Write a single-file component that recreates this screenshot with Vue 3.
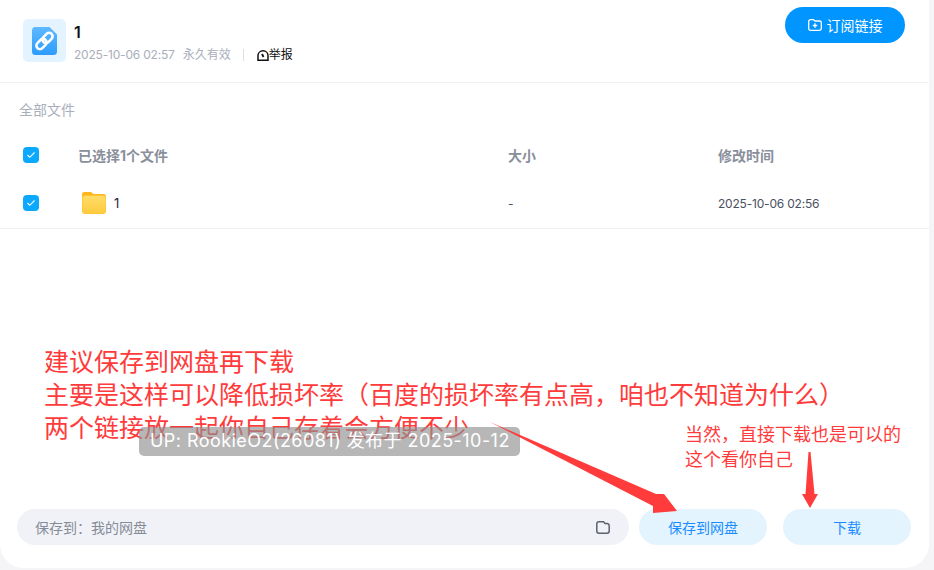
<template>
  <div class="page">
    <div class="card">
      <header class="share-head">
        <div class="file-badge">
          <svg width="25" height="28" viewBox="0 0 25 28">
            <defs>
              <linearGradient id="docFill" x1="0" y1="0" x2="0" y2="1">
                <stop offset="0" stop-color="#5fb8ff" />
                <stop offset="1" stop-color="#2d9cff" />
              </linearGradient>
            </defs>
            <path d="M3.500 0H17.500L25 7.500V24.500A3.500 3.500 0 0 1 21.500 28H3.500A3.500 3.500 0 0 1 0 24.500V3.500A3.500 3.500 0 0 1 3.500 0z" fill="url(#docFill)" />
            <g fill="none" stroke="#fff" stroke-width="2.600" transform="rotate(-45 12.500 14)">
              <rect x="2.500" y="10.500" width="11.500" height="7" rx="3.500" />
              <rect x="11" y="10.500" width="11.500" height="7" rx="3.500" />
            </g>
          </svg>
        </div>
        <div class="head-info">
          <div class="share-name">1</div>
          <div class="share-meta">
            <span class="date">2025-10-06 02:57</span>
            <span class="expire">永久有效</span>
            <span class="meta-sep"></span>
            <span class="report">
              <svg width="12" height="11" viewBox="0 0 12 11" fill="none" stroke="#111" stroke-width="1.500">
                <path d="M1 10.200V5.500a5 4.700 0 0 1 10 0v4.700z" />
                <path d="M5 4l1.500 3" stroke-width="1.800" />
              </svg>举报
            </span>
          </div>
        </div>
        <button class="subscribe-btn">
          <svg width="14" height="12" viewBox="0 0 14 12" fill="none" stroke="#fff" stroke-width="1.300">
            <path d="M0.700 2.500A1.800 1.800 0 0 1 2.500 0.700H5.500L7 2H11.500A1.800 1.800 0 0 1 13.300 3.800V9.500A1.800 1.800 0 0 1 11.500 11.300H2.500A1.800 1.800 0 0 1 0.700 9.500z" />
            <path d="M7 4.300v4.400M4.800 6.500h4.400" />
          </svg>
          订阅链接
        </button>
      </header>

      <div class="crumb">全部文件</div>

      <div class="row row-head">
        <span class="check">
          <svg width="10" height="8" viewBox="0 0 10 8" fill="none" stroke="#fff" stroke-width="1.100"><path d="M1.500 4l2.300 2.300L8.500 1.500" /></svg>
        </span>
        <span class="col-name">已选择1个文件</span>
        <span class="col-size">大小</span>
        <span class="col-time">修改时间</span>
      </div>
      <div class="row row-file">
        <span class="check">
          <svg width="10" height="8" viewBox="0 0 10 8" fill="none" stroke="#fff" stroke-width="1.100"><path d="M1.500 4l2.300 2.300L8.500 1.500" /></svg>
        </span>
        <span class="col-name file-cell">
          <svg width="24" height="22" viewBox="0 0 24 22">
            <defs>
              <linearGradient id="folderFill" x1="0" y1="0" x2="0" y2="1">
                <stop offset="0" stop-color="#ffdc68" />
                <stop offset="1" stop-color="#ffcb40" />
              </linearGradient>
            </defs>
            <path d="M2.500 0H9L11.500 2H21.500A2.500 2.500 0 0 1 24 4.500V8H0V2.500A2.500 2.500 0 0 1 2.500 0z" fill="#ffb51f" />
            <rect x="0" y="3" width="24" height="19" rx="3" fill="#ffc534" />
            <rect x="0.700" y="4" width="22.600" height="17.300" rx="2.500" fill="url(#folderFill)" />
          </svg>
          <span class="file-name">1</span>
        </span>
        <span class="col-size">-</span>
        <span class="col-time date">2025-10-06 02:56</span>
      </div>

      <div class="spacer"></div>

      <footer class="save-bar">
        <div class="save-path">
          <span>保存到：我的网盘</span>
          <svg width="14" height="13" viewBox="0 0 14 13" fill="none" stroke="#5c6270" stroke-width="1.500">
            <path d="M0.800 3A2.200 2.200 0 0 1 3 0.800H7.500L9 2.500H11A2.200 2.200 0 0 1 13.200 4.700V10A2.200 2.200 0 0 1 11 12.200H3A2.200 2.200 0 0 1 0.800 10z" />
          </svg>
        </div>
        <button class="pill save-btn">保存到网盘</button>
        <button class="pill down-btn">下载</button>
      </footer>
    </div>

    <!-- 截图上的手写批注，叠在页面上面 -->
    <div class="note note-main">
      <div>建议保存到网盘再下载</div>
      <div>主要是这样可以降低损坏率（百度的损坏率有点高，咱也不知道为什么）</div>
      <div>两个链接放一起你自己存着会方便不少</div>
    </div>
    <div class="note note-side">
      <div>当然，直接下载也是可以的</div>
      <div>这个看你自己</div>
    </div>
    <div class="watermark">UP: RookieO2(26081) 发布于 2025-10-12</div>
    <svg class="arrows" width="934" height="570" viewBox="0 0 934 570">
      <path d="M490 422L656 494L664 494L677 511L653 513L653 506z" fill="#ff3b3b" />
      <path d="M808.500 452H810.500L814.500 494H818L810 508L802 494H805.500z" fill="#ff3b3b" />
    </svg>
  </div>
</template>

<script setup>
</script>

<style>
html,
body {
  margin: 0;
  background: #f5f5f7;
}
</style>

<style scoped>
.page {
  position: relative;
  width: 934px;
  height: 570px;
  overflow: hidden;
  background: #f5f5f7;
  font-family: "Inter", "Noto Sans CJK SC", sans-serif;
}

.card {
  width: 929px;
  height: 568px;
  background: #fff;
  border-radius: 0 0 24px 24px;
  display: flex;
  flex-direction: column;
}

.share-head {
  height: 83px;
  box-sizing: border-box;
  border-bottom: 1px solid #f1f2f7;
  padding: 19px 24px 0 23px;
  display: flex;
  align-items: flex-start;
}

.file-badge {
  width: 43px;
  height: 43px;
  border-radius: 5px;
  background: #e3f3ff;
  display: flex;
  align-items: center;
  justify-content: center;
}

.head-info {
  margin-left: 8px;
  flex: 1;
}

.share-name {
  font-size: 16px;
  font-weight: 600;
  line-height: 26px;
  color: #111;
}

.share-meta {
  display: flex;
  align-items: center;
  font-size: 12px;
  line-height: 20px;
  color: #a9aebb;
}

.date {
  letter-spacing: -0.2px;
}

.expire {
  margin-left: 8px;
}

.meta-sep {
  width: 1px;
  height: 12px;
  margin: 0 13px 0 12px;
  background: #dcdfe6;
}

.report {
  display: flex;
  align-items: center;
  color: #111;
}

.subscribe-btn {
  margin: -12px 0 0;
  width: 120px;
  height: 36px;
  border: none;
  border-radius: 18px;
  background: #0095ff;
  color: #fff;
  font: inherit;
  font-size: 14px;
  display: flex;
  align-items: center;
  justify-content: center;
  gap: 5px;
}

.crumb {
  margin: 17px 0 0 19px;
  font-size: 14px;
  line-height: 20px;
  color: #a9aebb;
}

.row {
  height: 46px;
  position: relative;
  display: flex;
  align-items: center;
  font-size: 14px;
}

.row-head {
  margin-top: 12px;
  font-weight: 700;
  color: #8a8f9c;
}

.row-file {
  height: 50px;
  border-bottom: 1px solid #eeeff5;
  font-size: 12px;
  color: #4b5060;
}

.check {
  width: 16px;
  height: 16px;
  margin-left: 23px;
  border-radius: 4px;
  background: #0ba8ff;
  display: flex;
  align-items: center;
  justify-content: center;
}

.col-name {
  width: 430px;
  margin-left: 39px;
}

.file-cell {
  display: flex;
  align-items: center;
  padding-left: 4px;
  width: 426px;
}

.file-name {
  margin-left: 8px;
  font-size: 13px;
  color: #2c2540;
}

.col-size {
  width: 210px;
}

.spacer {
  flex: 1;
}

.save-bar {
  display: flex;
  align-items: center;
  padding: 0 0 23px 17px;
}

.save-path {
  width: 612px;
  height: 36px;
  box-sizing: border-box;
  padding: 0 19px 0 18px;
  border-radius: 18px;
  background: #f1f2f7;
  display: flex;
  align-items: center;
  justify-content: space-between;
  font-size: 14px;
  color: #868b98;
}

.pill {
  height: 36px;
  border: none;
  border-radius: 18px;
  background: #e3f4ff;
  color: #1a8cff;
  font: inherit;
  font-size: 14px;
}

.save-btn {
  width: 128px;
  margin-left: 10px;
}

.down-btn {
  width: 128px;
  margin-left: 16px;
}

.note {
  position: absolute;
  color: #ff3b3b;
  white-space: nowrap;
  font-family: "Noto Sans CJK SC", sans-serif;
}

.note-main {
  left: 44px;
  top: 344px;
  font-size: 25px;
  line-height: 33px;
}

.note-side {
  left: 685px;
  top: 421px;
  font-size: 18px;
  line-height: 25px;
}

.arrows {
  position: absolute;
  left: 0;
  top: 0;
}

.watermark {
  position: absolute;
  left: 139px;
  top: 427px;
  width: 381px;
  height: 29px;
  box-sizing: border-box;
  padding-left: 11px;
  border-radius: 5px;
  background: rgba(145, 145, 145, 0.65);
  color: #fff;
  font-size: 18px;
  letter-spacing: 0.45px;
  line-height: 28px;
  white-space: nowrap;
}
</style>
